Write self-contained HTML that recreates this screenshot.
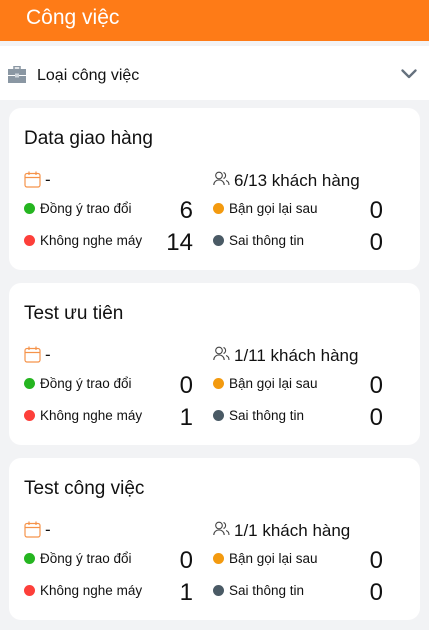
<!DOCTYPE html><html><head><meta charset="utf-8"><style>
body{margin:0;width:429px;height:630px;background:#f2f3f5;font-family:"Liberation Sans",sans-serif;position:relative;overflow:hidden;color:#111}
.hdr{position:absolute;left:0;top:0;width:429px;height:41px;background:#fe7b17;color:#fff;font-size:21px}
.hdr span{position:absolute;left:26px;top:6px}
.sel{position:absolute;left:0;top:46px;width:429px;height:54px;background:#fff}
.card{position:absolute;left:9px;width:411px;height:162px;background:#fff;border-radius:12px}
.a{position:absolute;white-space:nowrap}
.t{left:15px;top:20px;font-size:19px}
.dot{width:11px;height:11px;border-radius:50%;display:inline-block;vertical-align:-1px;margin-right:5px}
.l{font-size:13.5px}
.n{font-size:24px;text-align:right;width:60px}
</style></head><body>
<div class="hdr"><span>Công việc</span></div>
<div class="sel">
<svg class="a" style="left:8px;top:20px" width="18" height="17" viewBox="0 0 18 17"><rect x="6" y="0.5" width="6" height="3" fill="none" stroke="#8a97a3" stroke-width="1.5"/><rect x="0" y="3" width="18" height="6" fill="#8a97a3"/><rect x="0" y="10" width="18" height="7" fill="#8a97a3"/><rect x="7" y="7.5" width="4" height="4" fill="#cfd6dc"/></svg>
<div class="a" style="left:37px;top:21px;font-size:16px">Loại công việc</div>
<svg class="a" style="left:401px;top:23px" width="16" height="10" viewBox="0 0 16 10"><path d="M1.5 1.5L8 8 14.5 1.5" fill="none" stroke="#65717e" stroke-width="2.3" stroke-linecap="round" stroke-linejoin="round"/></svg>
</div>
<div id="c"></div>
<script>
var d=[["Data giao hàng","6/13","6","14","0","0",108],["Test ưu tiên","1/11","0","1","0","0",283],["Test công việc","1/1","0","1","0","0",458]];
var h="";
d.forEach(function(x){h+='<div class="card" style="top:'+x[6]+'px">'+
'<div class="a t">'+x[0]+'</div>'+
'<svg class="a" style="left:15px;top:63px" width="17" height="17" viewBox="0 0 17 17"><rect x="1" y="2.5" width="15" height="13.5" rx="2" fill="none" stroke="#f5934a" stroke-width="1.2"/><path d="M1 6.5H16M5 0.5V4M12 0.5V4" stroke="#f5934a" stroke-width="1.2"/></svg>'+
'<div class="a" style="left:36px;top:62px;font-size:17px">-</div>'+
'<svg class="a" style="left:204px;top:63px" width="17" height="15" viewBox="0 0 17 15"><circle cx="6" cy="4.5" r="3.3" fill="none" stroke="#444" stroke-width="1.1"/><path d="M0.8 14c0-3 2.3-5 5.2-5s5.2 2 5.2 5M10.5 1.5a3.2 3.2 0 0 1 0 6M13 9.5c1.8.6 3 2.3 3 4.5" fill="none" stroke="#444" stroke-width="1.1"/></svg>'+
'<div class="a" style="left:225px;top:63px;font-size:17px">'+x[1]+' khách hàng</div>'+
'<div class="a l" style="left:15px;top:93px"><span class="dot" style="background:#25b520"></span>Đồng ý trao đổi</div>'+
'<div class="a n" style="left:124px;top:89px">'+x[2]+'</div>'+
'<div class="a l" style="left:15px;top:125px"><span class="dot" style="background:#fd3f3a"></span>Không nghe máy</div>'+
'<div class="a n" style="left:124px;top:121px">'+x[3]+'</div>'+
'<div class="a l" style="left:204px;top:93px"><span class="dot" style="background:#f39a0f"></span>Bận gọi lại sau</div>'+
'<div class="a n" style="left:314px;top:89px">'+x[4]+'</div>'+
'<div class="a l" style="left:204px;top:125px"><span class="dot" style="background:#4a5a65"></span>Sai thông tin</div>'+
'<div class="a n" style="left:314px;top:121px">'+x[5]+'</div></div>';});
document.getElementById("c").innerHTML=h;
</script>
</body></html>
